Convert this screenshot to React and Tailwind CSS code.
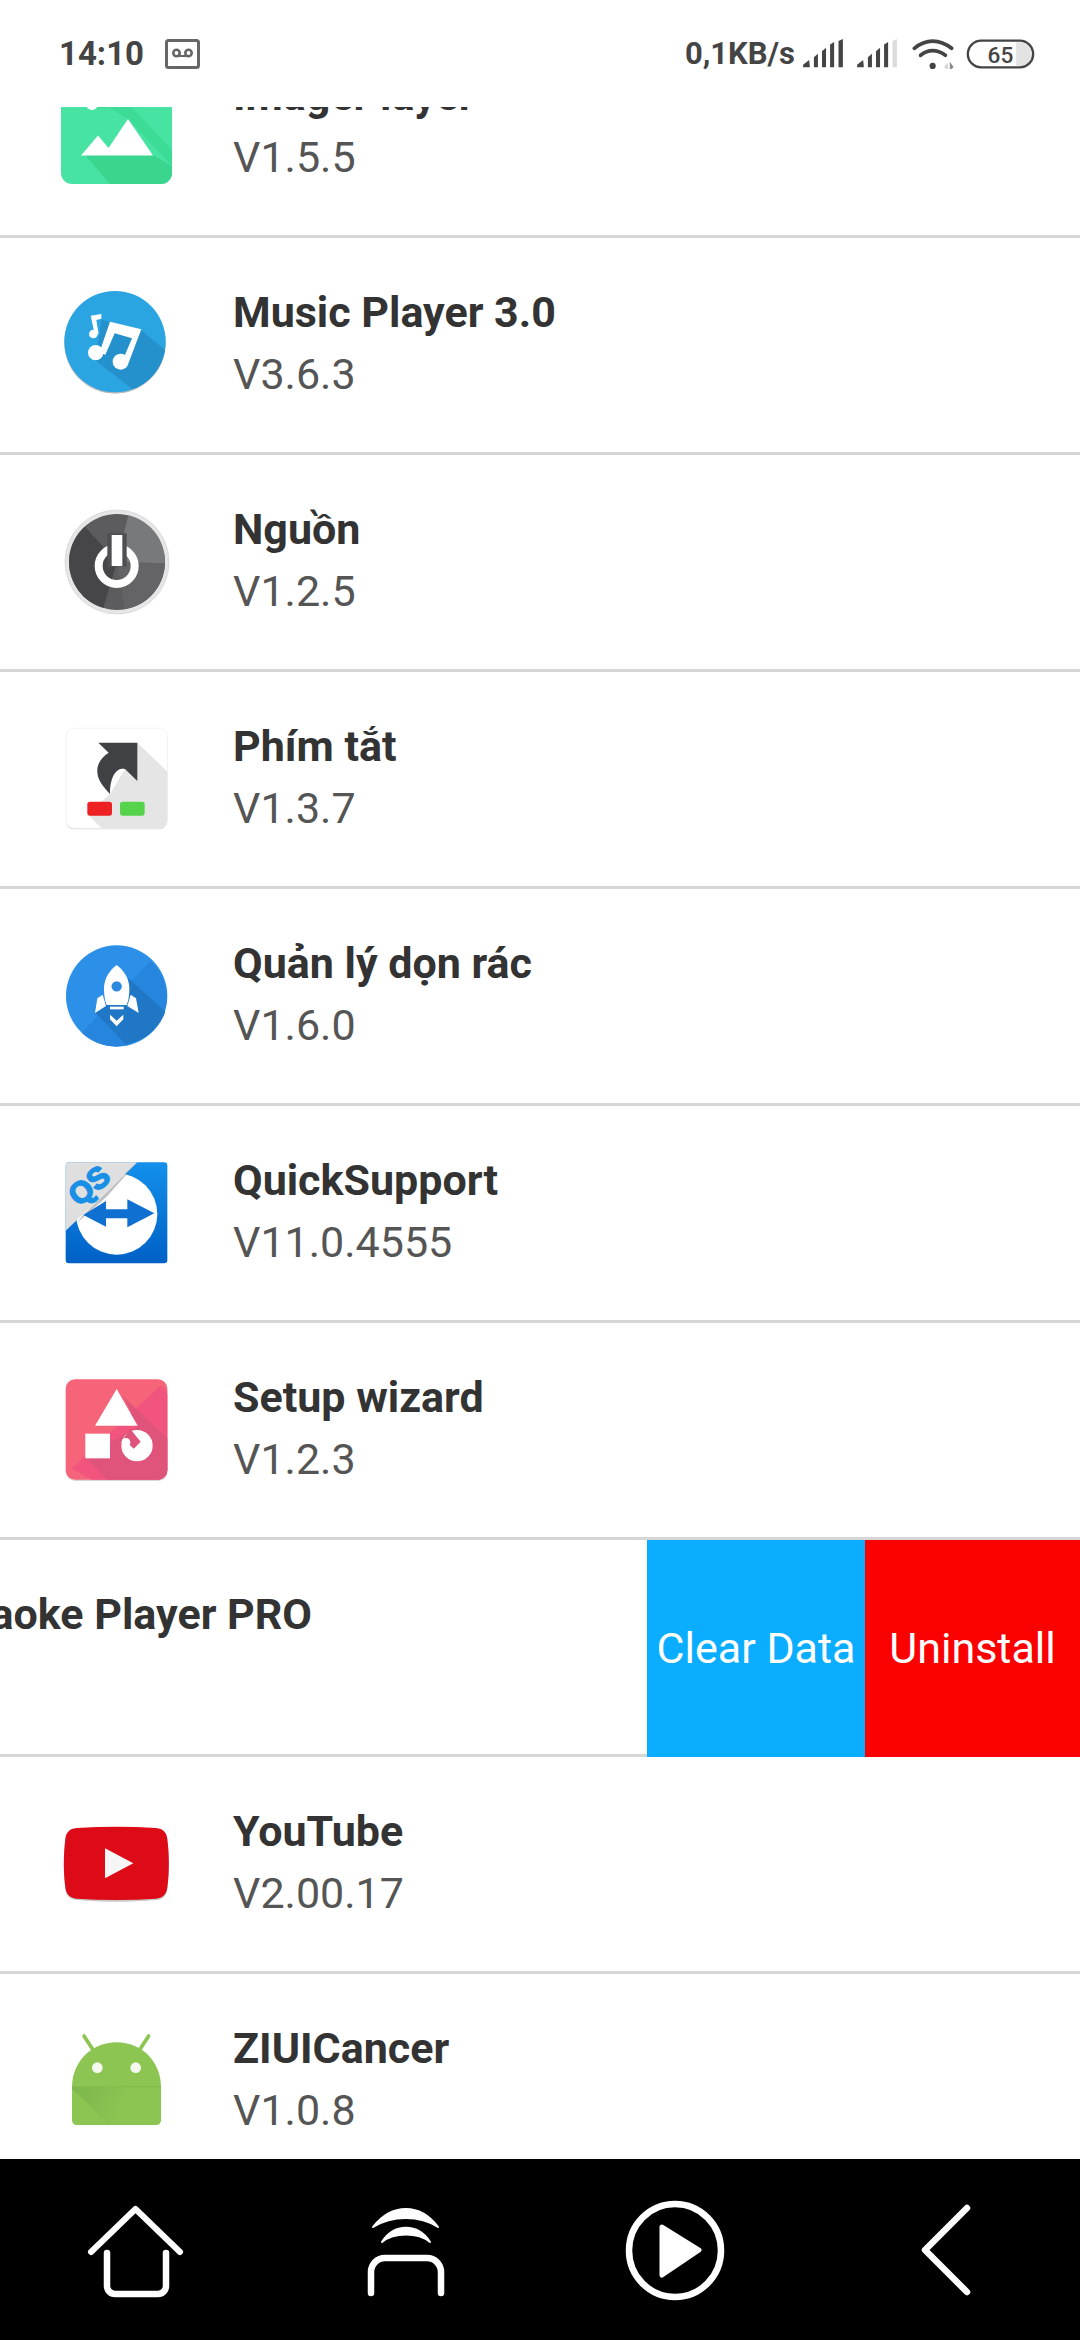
import React from "react";

const font = { fontFamily: "Roboto, sans-serif" };

function Box({ vb, children }) {
  return (
    <svg viewBox={vb} className="w-[120px] h-[120px] shrink-0 overflow-hidden">
      {children}
    </svg>
  );
}

const ImageIcon = () => (
  <Box vb="57 68 120 120">
    <rect x="61" y="72" width="111" height="112" rx="11" fill="#47e3a3" />
    <path d="M85 155 L153 155 L172 166 L172 173 A11 11 0 0 1 161 184 L110 184 Z" fill="#3ad58f" />
    <path d="M88 108 L110 108 L128 119 L172 166 L172 150 L125 100Z" fill="#3ddc96" />
    <path d="M81 155.5 L98 135.5 L108.5 148 L128 119 L153 155.5 Z" fill="#fff" />
    <circle cx="92" cy="104" r="6" fill="#fff" />
  </Box>
);

const MusicIcon = () => (
  <Box vb="81 45 360 360">
    <circle cx="255" cy="219" r="152" fill="#bbb" />
    <circle cx="255" cy="215" r="152" fill="#2aa5e2" />
    <path d="M215 150 L330 178 L405 240 A152 152 0 0 1 308 358 L195 270Z" fill="#2490cc" />
    <g fill="#fff">
      <circle cx="197" cy="248" r="23" />
      <circle cx="272" cy="275" r="24" />
      <path d="M208 248 L240 155 L334 178 L296 278 L282 262 L306 205 L254 190 L226 254Z" />
      <circle cx="190" cy="192" r="13" />
      <path d="M182 137 L214 132 L214 146 L199 150 L206 192 L194 192Z" />
    </g>
  </Box>
);

const PowerIcon = () => (
  <Box vb="81 696 360 360">
    <circle cx="261" cy="876" r="156" fill="#e6e6e6" stroke="#d0d0d0" strokeWidth="2" />
    <circle cx="261" cy="876" r="144" fill="#5c5c5e" />
    <path d="M261 876 L295 736 A144 144 0 0 1 405 880 Z" fill="#78797b" />
    <path d="M261 876 L405 880 A144 144 0 0 1 285 1018 Z" fill="#646466" />
    <path d="M261 876 L165 770 A144 144 0 0 0 117 876 A144 144 0 0 0 220 1014 Z" fill="#464648" />
    <circle cx="260" cy="888" r="54" fill="none" stroke="#fff" strokeWidth="24" />
    <rect x="232" y="790" width="58" height="100" fill="#4f4f51" />
    <rect x="245" y="795" width="32" height="93" fill="#fff" />
  </Box>
);

const ShortcutIcon = () => (
  <Box vb="81 57 360 360">
    <rect x="108" y="88" width="304" height="300" rx="24" fill="#d8d8d8" />
    <rect x="108" y="85" width="304" height="300" rx="24" fill="#fff" stroke="#efefef" strokeWidth="2" />
    <path d="M322 128 L412 215 L412 361 A24 24 0 0 1 388 385 L215 385 L172 342 L240 282 L285 207Z" fill="#e5e5e5" />
    <path d="M205 128 L322 128 L322 243 L285 207 C262 202 240 225 240 282 C215 255 200 235 202 208 C204 185 218 170 236 158Z" fill="#3f4145" />
    <rect x="172" y="305" width="74" height="42" rx="8" fill="#ed2024" />
    <rect x="270" y="305" width="74" height="42" rx="8" fill="#55d44b" />
  </Box>
);

const RocketIcon = () => (
  <Box vb="81 708 360 360">
    <circle cx="260" cy="888" r="152" fill="#2c90e9" />
    <path d="M362 782 A152 152 0 0 1 405 930 L290 1036 A152 152 0 0 1 155 998Z" fill="#2686de" />
    <path d="M296 835 L406 935 A152 152 0 0 1 288 1033 L195 938Z" fill="#2077c6" />
    <path d="M260 795 C240 810 222 835 222 865 C222 885 225 905 230 915 L290 915 C295 905 298 885 298 865 C298 835 280 810 260 795Z" fill="#fff" />
    <circle cx="260" cy="859" r="15.5" fill="#2b8ae0" />
    <path d="M218 884 L202 895 L195 939 L228 918Z M302 884 L318 895 L326 939 L292 918Z" fill="#fff" />
    <rect x="240" y="920" width="41" height="8" fill="#fff" />
    <path d="M240 944 L260 962 L280 944 L280 958 L260 979 L240 958Z" fill="#fff" />
  </Box>
);

const QsIcon = () => (
  <Box vb="81 39 360 360">
    <defs>
      <linearGradient id="qsg" x1="0" y1="0" x2="0" y2="1">
        <stop offset="0" stopColor="#1390ec" />
        <stop offset="1" stopColor="#0060c6" />
      </linearGradient>
    </defs>
    <rect x="107" y="67" width="305" height="303" rx="10" fill="url(#qsg)" />
    <circle cx="260" cy="222" r="122" fill="#fff" />
    <path d="M117 67 L322 67 L107 272 L107 77 A10 10 0 0 1 117 67Z" fill="#dfdfdf" />
    <path d="M322 67 L160 224 L140 250 L230 170Z" fill="#8a8f96" opacity="0.55" />
    <path d="M160 225 L228 183 L228 208 L292 208 L292 178 L373 220 L292 262 L292 235 L228 235 L228 260Z" fill="#0f70d2" />
    <text x="197" y="160" transform="rotate(-40 197 160)" textAnchor="middle" fontFamily="'Liberation Sans', sans-serif" fontWeight="700" fontSize="90" stroke="#1a8fe6" strokeWidth="5" fill="#1a8fe6">QS</text>
  </Box>
);

const SetupIcon = () => (
  <Box vb="81 690 360 360">
    <rect x="108" y="722" width="304" height="301" rx="28" fill="#d8d8d8" />
    <rect x="107" y="718" width="305" height="301" rx="28" fill="#f56479" />
    <path d="M390 738 A28 28 0 0 1 412 765 L412 990 A28 28 0 0 1 384 1019 L185 1019 L125 985Z" fill="#f1557d" />
    <path d="M280 770 L412 895 L412 991 A28 28 0 0 1 384 1019 L232 1019 L166 954 L323 857Z" fill="#e0537a" />
    <path d="M260 747 L323 857 L195 857Z" fill="#fff" />
    <rect x="166" y="881" width="74" height="74" fill="#fff" />
    <circle cx="321" cy="917" r="47" fill="#fff" />
    <path d="M300 866 L280 896 L311 926 L332 905Z" fill="#e0537a" />
    <circle cx="288" cy="907" r="13" fill="#fff" />
  </Box>
);

const YoutubeIcon = () => (
  <Box vb="81 12 360 360">
    <path d="M140 88 C220 81 300 81 378 88 C400 90 410 102 412 122 C418 165 418 222 412 266 C410 286 400 298 378 300 C300 307 220 307 140 300 C118 298 108 286 106 266 C100 222 100 165 106 122 C108 102 118 90 140 88Z" fill="#c9c9c9" />
    <path d="M140 84 C220 79 300 79 378 84 C400 86 410 98 412 118 C418 165 418 218 412 262 C410 282 400 294 378 296 C300 301 220 301 140 296 C118 294 108 282 106 262 C100 218 100 165 106 118 C108 98 118 86 140 84Z" fill="#dd0a18" />
    <path d="M225 145 L310 190 L225 235Z" fill="#f6f6f6" />
  </Box>
);

const AndroidIcon = () => (
  <Box vb="81 663 360 360">
    <defs>
      <linearGradient id="ands" x1="0" y1="0" x2="1" y2="0.3">
        <stop offset="0" stopColor="#7db64a" />
        <stop offset="1" stopColor="#8cc552" />
      </linearGradient>
    </defs>
    <path d="M162 708 L188 748 M356 708 L330 748" stroke="#8cc552" strokeWidth="11" strokeLinecap="round" />
    <path d="M126 862 C126 785 185 727 260 727 C335 727 393 785 393 862 L393 961 A14 14 0 0 1 379 975 L140 975 A14 14 0 0 1 126 961Z" fill="#8cc552" />
    <path d="M126 862 L290 862 L270 975 L238 975 L126 866Z" fill="url(#ands)" />
    <path d="M126 860 H393" stroke="#7fb74a" strokeWidth="2" />
    <circle cx="202" cy="803" r="16" fill="#f4f8ee" />
    <circle cx="317" cy="803" r="16" fill="#f4f8ee" />
  </Box>
);

function Row({ icon, title, version }) {
  return (
    <div className="h-[217px] border-b-[3px] border-[#d6d6d6] flex items-center pl-[57px] gap-[56px] bg-white shrink-0">
      {icon}
      <div className="flex flex-col pb-[4px]">
        <div className="text-[43px] leading-[62px] font-bold text-[#333333] whitespace-nowrap">{title}</div>
        <div className="text-[43px] leading-[62px] text-[#555555] whitespace-nowrap">{version}</div>
      </div>
    </div>
  );
}

function Signal({ last }) {
  return (
    <svg viewBox="610 116 118 86" className="w-[40px] h-[29px]">
      <path d="M610 200 L610 192 L628 178 L630 200Z" fill="#444" />
      <path d="M642 200 L642 170 L654 160 L654 200Z" fill="#444" />
      <path d="M666 200 L666 152 L678 142 L678 200Z" fill="#444" />
      <path d="M690 200 L690 132 L702 125 L702 200Z" fill="#444" />
      <path d="M715 200 L715 122 L728 116 L728 200Z" fill={last} />
    </svg>
  );
}

function Status() {
  return (
    <div className="h-[107px] shrink-0 bg-white flex items-center justify-between pl-[59px] pr-[45px] text-[#444444] font-bold">
      <div className="flex items-center gap-[21px]">
        <span className="text-[33px] leading-[40px]">14:10</span>
        <svg viewBox="0 0 35 30" className="w-[35px] h-[30px]">
          <rect x="1.5" y="1.5" width="32" height="27" rx="2" fill="none" stroke="#666" strokeWidth="3" />
          <circle cx="11.5" cy="14" r="3.2" fill="none" stroke="#666" strokeWidth="2.6" />
          <circle cx="23.5" cy="14" r="3.2" fill="none" stroke="#666" strokeWidth="2.6" />
          <path d="M11.5 17 H23.5" stroke="#666" strokeWidth="2" />
        </svg>
      </div>
      <div className="flex items-center">
        <span className="text-[31px] leading-[40px] mr-[8px]">0,1KB/s</span>
        <Signal last="#444" />
        <div className="w-[14px]" />
        <Signal last="#dcdcdc" />
        <svg viewBox="935 114 125 90" className="w-[43px] h-[31px] ml-[15px]">
          <path d="M942 144 C975 116 1015 116 1050 144" fill="none" stroke="#444" strokeWidth="11" strokeLinecap="round" />
          <path d="M960 164 C982 147 1008 147 1032 164" fill="none" stroke="#444" strokeWidth="11" strokeLinecap="round" />
          <circle cx="995" cy="195" r="9" fill="#444" />
          <path d="M1028 198 L1040 185 L1040 208Z" fill="#d5d5d5" />
          <path d="M1045 183 L1056 198 L1045 210Z" fill="#8a8a8a" />
        </svg>
        <svg viewBox="1100 114 206 90" className="w-[69px] h-[30px] ml-[11px]">
          <path d="M1250 124 L1262 124 A34 34 0 0 1 1262 194 L1250 194Z" fill="#e3e3e3" />
          <rect x="1105" y="119" width="196" height="80" rx="40" fill="none" stroke="#444" strokeWidth="7" />
          <text x="1203" y="185" textAnchor="middle" fontFamily="Roboto, sans-serif" fontSize="68" fontWeight="500" fill="#444">65</text>
        </svg>
      </div>
    </div>
  );
}

function NavBar() {
  const s = { fill: "none", stroke: "#fff", strokeLinecap: "round", strokeLinejoin: "round" };
  return (
    <div className="h-[181px] shrink-0 bg-black grid grid-cols-4 place-items-center">
      <svg viewBox="75 2190 120 120" className="w-[120px] h-[120px]">
        <path d="M91 2252 L135.5 2209 L180 2252" {...s} strokeWidth="6" />
        <path d="M107 2253 L107 2286 A8 8 0 0 0 115 2294 L158 2294 A8 8 0 0 0 166 2286 L166 2253" {...s} strokeWidth="6.5" />
      </svg>
      <svg viewBox="345 2190 120 120" className="w-[120px] h-[120px]">
        <path d="M373 2227 C392 2203 420 2203 438 2227 C420 2215 392 2215 373 2227Z" {...s} fill="#fff" strokeWidth="2" />
        <path d="M382 2242 C394 2223 418 2223 430 2242 C418 2232 394 2232 382 2242Z" {...s} fill="#fff" strokeWidth="2" />
        <path d="M371 2293 L371 2272 A14 14 0 0 1 385 2258 L427 2258 A14 14 0 0 1 441 2272 L441 2293" {...s} strokeWidth="6.5" />
      </svg>
      <svg viewBox="615 2190 120 120" className="w-[120px] h-[120px]">
        <ellipse cx="675" cy="2250.5" rx="46" ry="46.5" {...s} strokeWidth="6.5" />
        <path d="M662 2227 L699 2250 L662 2275Z" {...s} fill="#fff" strokeWidth="5" />
      </svg>
      <svg viewBox="885 2190 120 120" className="w-[120px] h-[120px]">
        <path d="M967 2208 L925 2250 L967 2292" {...s} strokeWidth="6.5" />
      </svg>
    </div>
  );
}

export default function App() {
  return (
    <div className="w-[1080px] h-[2340px] flex flex-col overflow-hidden bg-white" style={font}>
      <Status />
      <div className="flex-1 min-h-0 overflow-hidden">
        <div className="flex flex-col -mt-[86px]">
          <Row icon={<ImageIcon />} title="Imager layer" version="V1.5.5" />
          <Row icon={<MusicIcon />} title="Music Player 3.0" version="V3.6.3" />
          <Row icon={<PowerIcon />} title="Nguồn" version="V1.2.5" />
          <Row icon={<ShortcutIcon />} title="Phím tắt" version="V1.3.7" />
          <Row icon={<RocketIcon />} title="Quản lý dọn rác" version="V1.6.0" />
          <Row icon={<QsIcon />} title="QuickSupport" version="V11.0.4555" />
          <Row icon={<SetupIcon />} title="Setup wizard" version="V1.2.3" />
          <div className="h-[217px] flex shrink-0">
            <div className="w-[647px] h-[217px] overflow-hidden border-b-[3px] border-[#d6d6d6] flex justify-end pr-[335px]">
              <div className="text-[43px] leading-[62px] font-bold text-[#333333] whitespace-nowrap mt-[43px] shrink-0">Karaoke Player PRO</div>
            </div>
            <div className="w-[218px] bg-[#0aadff] text-white text-[43px] flex items-center justify-center whitespace-nowrap">Clear Data</div>
            <div className="w-[215px] bg-[#fb0000] text-white text-[43px] flex items-center justify-center whitespace-nowrap">Uninstall</div>
          </div>
          <Row icon={<YoutubeIcon />} title="YouTube" version="V2.00.17" />
          <Row icon={<AndroidIcon />} title="ZIUICancer" version="V1.0.8" />
        </div>
      </div>
      <NavBar />
    </div>
  );
}
